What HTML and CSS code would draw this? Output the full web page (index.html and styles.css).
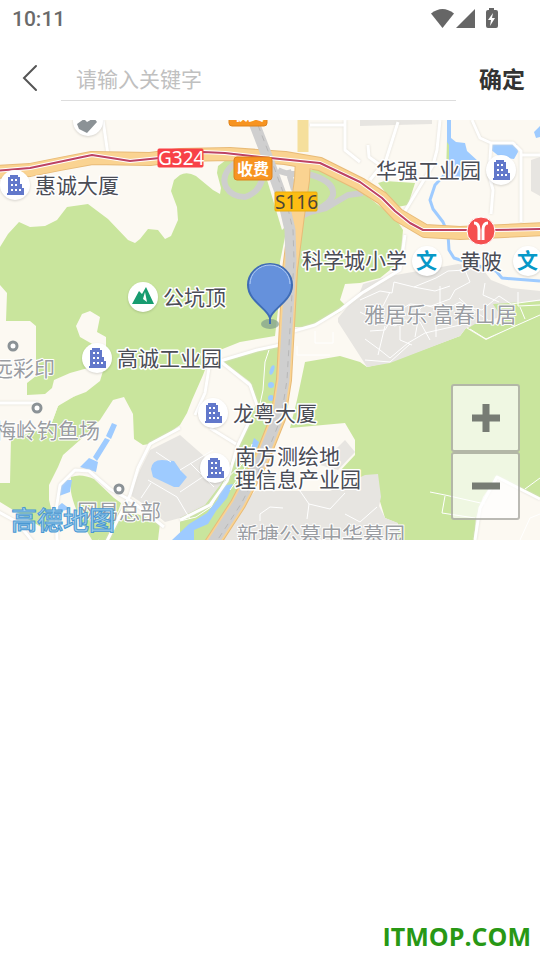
FILE: index.html
```html
<!DOCTYPE html>
<html lang="zh-CN">
<head>
  <meta charset="UTF-8">
  <meta name="viewport" content="width=device-width, initial-scale=1">
  <title>选择位置</title>
  <link rel="stylesheet" href="styles.css">
</head>
<body>
  <div class="status-bar">
    <span class="time">10:11</span>
    <svg class="status-icons" width="68" height="24" viewBox="430 5 68 24">
      <path d="M431 12.500Q442.500 3.500 454 12.500L442.500 27Z"/>
      <path d="M475 8V27H456Z"/>
      <path d="M489 7H494V9H496Q498 9 498 11V25Q498 27 496 27H488Q486 27 486 25V11Q486 9 488 9H489Z"/>
      <path class="bolt" d="M493 12L488 19H491L490 25L495 17H492Z"/>
    </svg>
  </div>

  <!-- 搜索栏 -->
  <form class="search-bar">
    <button type="button" class="back" aria-label="返回">
      <svg width="18" height="28" viewBox="0 0 18 28"><path d="M15 2L3 14L15 26"/></svg>
    </button>
    <input type="text" class="keyword" placeholder="请输入关键字" aria-label="请输入关键字">
    <button type="button" class="confirm">确定</button>
  </form>

  <!-- 地图 -->
  <main class="map">
    <svg class="map-canvas" viewBox="0 120 540 420" preserveAspectRatio="xMidYMid slice">
      <defs>
        <g id="building">
          <circle class="disc" r="15"/>
          <path class="tower" d="M-5 -10H3V-8H5V-1H7V3H9V10H-8V8H-7V-8H-5Z"/>
          <path class="windows" d="M-4 -6H-2V-4H-4ZM0 -6H2V-4H0ZM-4 -1H-2V1H-4ZM0 -1H2V1H0ZM-4 4H-2V6H-4ZM0 4H2V6H0ZM4 4H6V6H4Z"/>
        </g>
      </defs>

      <!-- 绿地 -->
      <g class="green">
        <path d="M0 247L8 234L19 222L30 227L45 226L57 220L67 207L88 204L108 219L128 240L135 243L140 239L148 229L158 230L165 239L171 236L178 220L177 207L171 191L174 180L180 175Q187 171 196 176L213 190L220 194L221 188L217 173L218 166L226 160H262L273 180L279 198L288 222L280 262L278 310L275 336L240 342L220 350L210 357L203 375L192 400L187 413L180 425L155 443L143 445L134 439L133 414L124 397L113 400L100 420L80 440L63 455L58 467L49 485L49 500L52 512L46 530L0 502V483H10L11 438L40 430L51 425L58 406L75 396L86 393L60 400L27 395V383H0Z"/>
        <path d="M305 170H320L342 178L372 200L396 219L403 230L400 262L380 278L360 283L345 284L340 300L345 305L340 312L325 320L310 327L294 327L298 240Z"/>
        <path d="M305 362L340 356L360 362L367 367L390 362L460 336L466 328L486 340L540 314V498L497 477L483 497L476 518L474 540H398L397 523L385 518L379 498L340 471L355 455V440L345 423L290 428L297 400Z"/>
        <path d="M222 361L278 345L280 395L275 430L258 460L238 496L208 540H180V513L205 500L226 474L236 450L257 402L250 382Z"/>
        <path d="M71 477Q81 473 94 479L114 498L121 503L114 523L98 540H92Q74 510 71 492Z"/>
        <path d="M98 540L122 508L160 523L158 540Z"/>
        <path d="M415 183L385 181L378 183L397 207L408 205ZM447 139H450V175H446Z"/>
      </g>
      <g class="land">
        <path d="M0 285L7 293L6 321L30 321L36 326V376L27 383V395L45 394L52 388L54 380L70 373L95 366L94 345L80 337L76 326L82 314L90 311L100 317L97 332L106 337V361L100 381L86 392L65 400L58 406L51 425L10 440V483H0Z"/>
        <path d="M262 163L275 163L288 224L282 230Z"/>
      </g>

      <!-- 居民区 -->
      <g class="block">
        <path d="M360 292L363 284L390 276L458 264L481 267L491 280L511 288L540 291V303L506 315L466 328L460 336L390 363L367 367L338 322V318Z"/>
        <path d="M180 435L150 450L140 470L130 495L145 505L165 522L180 518L205 505L224 480L213 464Z"/>
        <path d="M218 540L236 514L255 491H330L350 482L365 475L378 474L381 497L379 506L385 518L398 523V540Z"/>
        <path d="M360 120H432V124L360 126ZM531 160L540 157V196L531 191Z"/>
        <path d="M345 440L355 452L338 470L320 465Z"/>
      </g>
      <path class="green-fill" d="M493 304L540 301V317L486 339L468 328L475 324H506Z"/>

      <!-- 水系 -->
      <g class="water">
        <path d="M447 120H451V138L456 142L465 143L467 151L479 162L470 168L460 177L449 179V145L447 142Z"/>
        <path d="M490 144H517L518 152L514 159L500 157L490 149ZM540 126L534 132L536 138L540 137Z"/>
        <path d="M112 423L117 425L111 439L106 436ZM105 438L110 440L97 461L93 457ZM89 458L98 462L96 472L80 467ZM58 488L66 480L72 480L70 492L59 496ZM62 503L70 509L58 512L57 507Z"/>
        <path d="M151 469Q152 460 162 460L174 461L181 471L187 477L179 487H174L153 477Z"/>
        <ellipse cx="272" cy="370" rx="2" ry="5" transform="rotate(20 272 370)"/>
        <ellipse cx="271" cy="385" rx="3" ry="3"/>
        <ellipse cx="271" cy="398" rx="3" ry="3"/>
        <path d="M254 438L259 442L257 448L251 447ZM222 486L233 484L227 498L216 511L208 524L194 530V540H172L189 524L207 513L218 499Z"/>
      </g>
      <path class="river" d="M449 170L435 185L430 200L433 209L443 222L448 234L449 250L454 258L482 267L496 271L502 278L540 281"/>

      <!-- 支路 -->
      <g class="minor-road">
        <path d="M440 120L437 150L433 165L405 211L402 226M398 122L386 160L370 180M368 145L369 157L380 165M472 120L480 138L491 143H513L521 151V222M491 143L489 175L493 190L491 214M521 155H540M103 120L108 155M310 125H345M345 120V150L360 162"/>
        <path d="M-4 403H38M220 361L257 350L285 344M210 362L205 393L195 415M220 361L250 385L257 405M-5 510L17 522L38 548M57 540L56 510L60 485L75 470L89 471L110 489L130 500L164 527M180 428L150 444L138 468L130 495L105 545M210 428L236 444"/>
        <path d="M294 331L315 325L340 310L362 293L400 270L405 235M180 520L210 505L227 481L238 445L250 420M475 540L480 508L497 477L540 499"/>
      </g>
      <g class="lane">
        <path d="M360 300L380 291L392 293L394 282L414 287L436 278L448 271L465 270L470 282L455 290L450 299L431 306L410 304L395 313L385 330L370 331"/>
        <path d="M360 312L375 320L395 326L405 320L420 322L430 340M390 292L383 306L369 309M414 287L435 291L450 286M378 355L385 326M365 339L380 350L390 358L408 343L425 333L460 325M410 319L424 305L445 310L460 302L488 320M459 298L470 308L482 310L499 296L511 304L540 300M485 283L483 295L499 302M440 286V306M400 326V340L412 345M420 310L415 337M436 321V337M365 360L390 362L410 344M470 329L486 339L540 315M518 292V306L540 305M520 307L525 319"/>
        <path d="M269 350L265 362L263 390L257 418M333 332V343H315V331M297 355V346M297 355H330M430 492L445 495L485 504M445 496L442 513L475 518M525 489L540 478M148 480L177 497L190 519M156 452L171 462M141 498L151 483M180 470L213 450M180 492L210 472M190 463L214 487M260 521V514L270 507L283 508M300 491L309 504L307 519M309 504L330 509L345 493M345 514L360 522L377 507"/>
        <path d="M285 400L269 440L257 450L225 480L211 507L196 517L180 521M252 444L244 470L230 490M520 540L530 518L540 514"/>
      </g>

      <!-- 匝道 -->
      <g class="ramp">
        <path d="M235 163Q220 175 226 187Q232 197 245 197Q258 193 262 180M278 170Q285 174 295 174H308Q335 181 333 195Q329 206 310 212L300 217M310 212L326 208L348 195L363 193M288 170L294 190"/>
      </g>

      <!-- 主干道 -->
      <path class="yellow-road" d="M303 115V152"/>
      <path class="road-edge" d="M-5 172L30 170L60 164L92 158L150 159L180 155L230 154L285 158L320 164L360 184L382 198L398 215L425 231L460 233L545 229"/>
      <path class="road-edge narrow" d="M303 158L302 180L297 215L290 270L284 380L278 418L262 458L238 504L210 547"/>
      <path class="road" d="M-5 172L30 170L60 164L92 158L150 159L180 155L230 154L285 158L320 164L360 184L382 198L398 215L425 231L460 233L545 229"/>
      <path class="road narrow" d="M303 158L302 180L297 215L290 270L284 380L278 418L262 458L238 504L210 547"/>
      <path class="expressway" d="M251 115L265 151L283 200L290 230L291 260L284 380L278 418L262 458L238 504L210 547"/>
      <path class="dash" d="M254 115L268 151L286 200L293 230L294 260L287 380L281 418L265 458L241 504L213 547"/>
      <path class="metro-edge" d="M-5 171L30 168L92 155L130 161L160 158L203 152L225 153L270 158L320 163L360 182L382 198L395 211L410 223L423 230H490L545 229"/>
      <path class="metro" d="M-5 171L30 168L92 155L130 161L160 158L203 152L225 153L270 158L320 163L360 182L382 198L395 211L410 223L423 230H490L545 229"/>

      <!-- 标注图标 -->
      <use href="#building" x="15" y="185"/>
      <use href="#building" x="501" y="170"/>
      <use href="#building" x="97" y="358"/>
      <use href="#building" x="213" y="413"/>
      <use href="#building" x="215" y="468"/>
      <circle class="disc" cx="88" cy="121" r="15"/>
      <path class="tag" d="M77 124L84 119L87 122L94 118L97 122L87 133L79 129ZM89 120L94 115L97 118L93 123Z"/>
      <circle class="disc" cx="143" cy="297" r="15"/>
      <path class="peak" d="M132 304L139 291L142 294L146 287L154 304ZM145 292L143 299L147 302Z" fill-rule="evenodd"/>
      <circle class="disc" cx="427" cy="261" r="15"/>
      <circle class="disc" cx="528" cy="261" r="15"/>
      <circle class="station" cx="481" cy="231" r="14"/>
      <path class="station-mark" d="M474 223Q479 223 479 230V240M488 223Q483 223 483 230V240"/>
      <circle class="dot" cx="13" cy="346" r="4"/>
      <circle class="dot" cx="37" cy="408" r="4"/>
      <circle class="dot" cx="119" cy="489" r="4"/>

      <!-- 道路编号 -->
      <rect class="shield red" x="158" y="149" width="45" height="18" rx="1"/>
      <text class="road-no light" x="158" y="165">G324</text>
      <rect class="shield amber" x="275" y="192" width="42" height="19" rx="1"/>
      <text class="road-no" x="275" y="209">S116</text>
      <rect class="shield orange" x="229" y="103" width="38" height="23" rx="3"/>
      <text class="toll" x="232" y="120">收费</text>
      <rect class="shield orange" x="234" y="157" width="38" height="23" rx="3"/>
      <text class="toll" x="237" y="175">收费</text>

      <!-- 地名 -->
      <g class="place">
        <text x="35" y="193">惠诚大厦</text>
        <text x="376" y="178">华强工业园</text>
        <text x="302" y="268">科学城小学</text>
        <text x="460" y="269">黄陂</text>
        <text x="163" y="305">公坑顶</text>
        <text x="117" y="366">高诚工业园</text>
        <text x="233" y="421">龙粤大厦</text>
        <text x="235" y="464">南方测绘地</text>
        <text x="235" y="487">理信息产业园</text>
      </g>
      <g class="place faint">
        <text x="364" y="322">雅居乐·富春山居</text>
        <text x="-8" y="376">远彩印</text>
        <text x="-5" y="438">梅岭钓鱼场</text>
        <text x="77" y="519">网易总部</text>
        <text x="237" y="542">新塘公墓中华墓园</text>
      </g>
      <text class="school" x="416" y="268">文</text>
      <text class="school" x="517" y="268">文</text>

      <!-- 当前位置 -->
      <ellipse class="pin-shadow" cx="270" cy="324" rx="9" ry="5"/>
      <path class="pin" d="M270 324V318C267 308 248 301 248 285A22 21 0 0 1 292 285C292 301 273 308 270 318"/>
      <path class="pin-shine" d="M250 284A20 19 0 0 1 290 284"/>
    </svg>

    <span class="map-logo">高德地图</span>
    <div class="zoom">
      <button type="button" aria-label="放大"><svg width="30" height="30" viewBox="0 0 30 30"><path d="M1 15H29M15 1V29"/></svg></button>
      <button type="button" aria-label="缩小"><svg width="30" height="30" viewBox="0 0 30 30"><path d="M1 15H29"/></svg></button>
    </div>
  </main>

  <footer class="site">ITMOP.COM</footer>
</body>
</html>
```
FILE: styles.css
```css
* {
  box-sizing: border-box;
}

body {
  margin: 0;
  min-height: 100vh;
  display: flex;
  flex-direction: column;
  background-color: #fff;
  font-family: "Noto Sans", "Noto Sans CJK SC", sans-serif;
}

button {
  border: none;
  padding: 0;
  background: none;
  cursor: pointer;
}

.status-bar {
  display: flex;
  justify-content: space-between;
  align-items: center;
  height: 36px;
  padding: 2px 42px 0 12px;
}

.time {
  font: 500 21px/24px Roboto, sans-serif;
  color: #6a6a6a;
}

.status-icons {
  margin-bottom: 2px;
  fill: #666;
}

.status-icons .bolt {
  fill: #fff;
}

/* search bar */
.search-bar {
  display: flex;
  align-items: center;
  height: 84px;
  padding: 0 15px 0 21px;
}

.back {
  width: 40px;
  height: 44px;
  text-align: left;
}

.back svg {
  display: block;
  fill: none;
  stroke: #555;
  stroke-width: 2;
  stroke-linecap: round;
}

.keyword {
  flex: 1;
  min-width: 0;
  height: 46px;
  margin-right: 23px;
  padding: 0 15px;
  border: none;
  border-bottom: 1px solid #ddd;
  border-radius: 0;
  outline: none;
  background: none;
  font: 21px/32px "Noto Sans CJK SC", sans-serif;
  color: #333;
}

.keyword::placeholder {
  color: #c0c0c0;
}

.confirm {
  font: 700 23px/32px "Noto Sans CJK SC", sans-serif;
  color: #333;
}

/* map */
.map {
  position: relative;
  height: 420px;
  overflow: hidden;
}

.map-canvas {
  display: block;
  width: 100%;
  height: 100%;
  background-color: #fcf9f2;
}

.green, .green-fill { fill: #c9e59d; }
.land { fill: #fcf9f2; }
.block { fill: #e7e5e1; }
.water { fill: #9ecbff; }
.disc { fill: #fff; filter: drop-shadow(0 1px 1px rgba(0, 0, 0, 0.15)); }
.tower { fill: #6278cb; }
.windows { fill: #fff; }
.tag { fill: #8b9296; }
.peak { fill: #179c70; }
.station { fill: #f55050; stroke: #fff; stroke-width: 1; }
.dot { fill: #fff; stroke: #8b9296; stroke-width: 3; }

.river,
.minor-road,
.lane,
.ramp,
.yellow-road,
.road,
.road-edge,
.expressway,
.dash,
.metro,
.metro-edge,
.station-mark {
  fill: none;
  stroke-linejoin: round;
}

.river { stroke: #9ecbff; stroke-width: 3; }
.minor-road { stroke: #fff; stroke-width: 3; filter: drop-shadow(0 0 1px #dedbd4); }
.lane { stroke: #fff; stroke-width: 1; }
.ramp { stroke: #cecece; stroke-width: 6; }
.yellow-road { stroke: #f5df9c; stroke-width: 11; }
.road-edge { stroke: #e8bb78; stroke-width: 14; }
.road { stroke: #fad391; stroke-width: 12; }
.road-edge.narrow { stroke-width: 16; }
.road.narrow { stroke-width: 14; }
.expressway { stroke: #cfcfcf; stroke-width: 11; }
.dash { stroke: #b8b8b8; stroke-width: 1; stroke-dasharray: 6 5; }
.metro-edge { stroke: #fff; stroke-width: 4; }
.metro { stroke: #bd4364; stroke-width: 2; }
.station-mark { stroke: #fff; stroke-width: 3; }

.shield { stroke-width: 1; }
.red { fill: #f84147; stroke: #f84147; }
.amber { fill: #fdbd13; stroke: #e9ac10; }
.orange { fill: #f79421; stroke: #df8218; }

.road-no {
  font: 19px "Noto Sans", sans-serif;
  fill: #4b4638;
}

.road-no.light { fill: #fff; }

.toll {
  font: 700 16px "Noto Sans CJK SC", sans-serif;
  fill: #fff;
}

.place {
  font: 400 21px "Noto Sans", "Noto Sans CJK SC", sans-serif;
  fill: #4b4d56;
  stroke: #fff;
  stroke-width: 3;
  stroke-linejoin: round;
  paint-order: stroke;
}

.faint {
  fill: #9a9da2;
  stroke-width: 2;
}

.school {
  font: 700 21px "Noto Sans CJK SC", sans-serif;
  fill: #0799c8;
}

.pin-shadow { fill: #7f9e8c; fill-opacity: 0.7; }
.pin { fill: #6591dc; stroke: #3f6cb5; stroke-width: 2; }
.pin-shine { fill: none; stroke: #b3cdf5; stroke-width: 1; }

.map-logo {
  position: absolute;
  left: 11px;
  bottom: 5px;
  font: 500 26px/32px "Noto Sans CJK SC", sans-serif;
  color: #9accec;
  -webkit-text-stroke: 1px #4a98d3;
}

.zoom {
  position: absolute;
  right: 20px;
  bottom: 20px;
  display: flex;
  flex-direction: column;
}

.zoom button {
  display: flex;
  align-items: center;
  justify-content: center;
  width: 69px;
  height: 68px;
  border: 2px solid rgba(120, 120, 110, 0.5);
  border-radius: 3px;
  background-color: rgba(255, 255, 255, 0.7);
}

.zoom svg {
  fill: none;
  stroke: #777c74;
  stroke-width: 7;
}

.site {
  margin-top: auto;
  padding: 0 9px 7px;
  text-align: right;
  font: 700 25px/34px "Open Sans", sans-serif;
  color: #289815;
}
```
